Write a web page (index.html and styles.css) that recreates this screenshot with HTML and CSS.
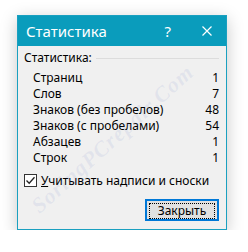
FILE: index.html
```html
<!DOCTYPE html>
<html lang="ru">
<head>
    <meta charset="UTF-8">
    <meta name="viewport" content="width=device-width, initial-scale=1.0">
    <title>Статистика</title>
    <link rel="stylesheet" href="styles.css">
</head>
<body>
    <div class="dialog">
        <div class="titlebar">
            <span class="title">Статистика</span>
            <span class="help">?</span>
            <svg class="close" width="10" height="10" viewBox="0 0 10 10">
                <path d="M0.5 0.5 L9.5 9.5 M9.5 0.5 L0.5 9.5" stroke="#fff" stroke-width="1.2" fill="none"/>
            </svg>
        </div>
        <div class="content">
            <div class="group">
                <span>Статистика:</span>
                <span class="rule"></span>
            </div>
            <div class="stats">
                <div class="row"><span>Страниц</span><span>1</span></div>
                <div class="row"><span>Слов</span><span>7</span></div>
                <div class="row"><span>Знаков (без пробелов)</span><span>48</span></div>
                <div class="row"><span>Знаков (с пробелами)</span><span>54</span></div>
                <div class="row"><span>Абзацев</span><span>1</span></div>
                <div class="row"><span>Строк</span><span>1</span></div>
            </div>
            <label class="check">
                <span class="box">
                    <svg width="11" height="11" viewBox="0 0 11 11">
                        <path d="M1.5 5.5 L4.2 8.3 L9.5 2.2" stroke="#222" stroke-width="1.3" fill="none"/>
                    </svg>
                </span>
                <span><u>У</u>читывать надписи и сноски</span>
            </label>
            <div class="footer">
                <button class="btn"><span class="focus">Закрыть</span></button>
            </div>
        </div>
        <div class="watermark">SoringPCrepair.Com</div>
    </div>
</body>
</html>
```

FILE: styles.css
```css
body {
    margin: 0;
    background-color: #fff;
    font-family: "Noto Sans", "Liberation Sans", sans-serif;
    font-size: 12px;
    color: #000;
}
.dialog {
    position: relative;
    overflow: hidden;
    width: 208px;
    margin: 15px 0 0 17px;
    border: 1px solid #1aa0c0;
    background-color: #f0f0f0;
    box-shadow: 0 4px 16px rgba(0, 0, 0, 0.22);
}
.titlebar {
    height: 30px;
    display: flex;
    align-items: center;
    padding: 0 14px 0 8px;
    background-color: #0a9cbc;
    color: #fff;
    font-size: 15px;
}
.title {
    flex: 1;
}
.help {
    margin-right: 31px;
}
.content {
    padding: 4px 7px 8px 6px;
}
.group {
    display: flex;
    align-items: center;
    height: 16px;
    line-height: 16px;
}
.rule {
    flex: 1;
    height: 1px;
    margin-left: 4px;
    background-color: #dcdcdc;
}
.stats {
    margin-top: 4px;
    padding-left: 9px;
}
.row {
    display: flex;
    justify-content: space-between;
    height: 16px;
    line-height: 16px;
}
.check {
    display: flex;
    align-items: center;
    height: 16px;
    margin-top: 6px;
}
.box {
    width: 11px;
    height: 11px;
    margin-right: 4px;
    border: 1px solid #333;
    background-color: #fff;
}
.box svg {
    display: block;
}
.footer {
    display: flex;
    justify-content: flex-end;
    margin-top: 11px;
}
.btn {
    width: 74px;
    height: 22px;
    padding: 2px;
    border: 2px solid #0078d7;
    background-color: #e1e1e1;
    font-family: inherit;
    font-size: 12px;
    color: #000;
}
.focus {
    display: block;
    height: 14px;
    line-height: 14px;
    border: 1px dotted #000;
}
.watermark {
    position: absolute;
    left: -10px;
    top: 110px;
    transform: rotate(-42deg);
    font-family: "Liberation Serif", serif;
    font-style: italic;
    font-weight: bold;
    font-size: 22px;
    letter-spacing: 1px;
    color: rgba(120, 140, 200, 0.12);
    white-space: nowrap;
    pointer-events: none;
}
```
